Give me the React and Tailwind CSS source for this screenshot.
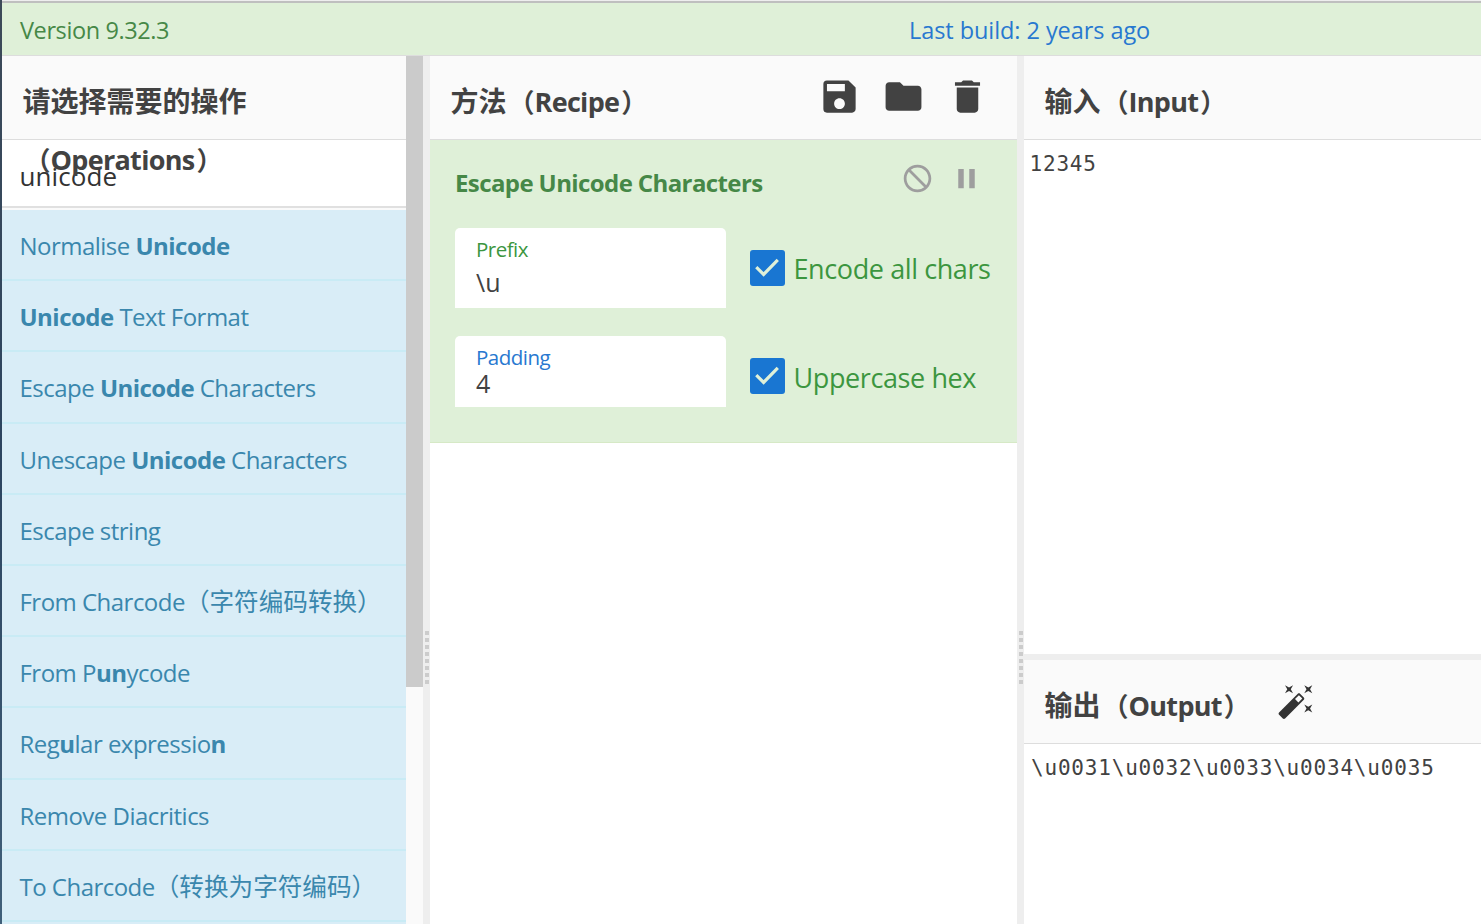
import { MdSave, MdFolder, MdDelete, MdPause, MdNotInterested } from "react-icons/md";

const operations = [
  [{ t: "Normalise " }, { t: "Unicode", b: true }],
  [{ t: "Unicode", b: true }, { t: " Text Format" }],
  [{ t: "Escape " }, { t: "Unicode", b: true }, { t: " Characters" }],
  [{ t: "Unescape " }, { t: "Unicode", b: true }, { t: " Characters" }],
  [{ t: "Escape string" }],
  [{ t: "From Charcode" }, { t: "（字符编码转换）", cjk: true }],
  [{ t: "From P" }, { t: "un", b: true }, { t: "ycode" }],
  [{ t: "Reg" }, { t: "u", b: true }, { t: "lar expressio" }, { t: "n", b: true }],
  [{ t: "Remove Diacritics" }],
  [{ t: "To Charcode" }, { t: "（转换为字符编码）", cjk: true }],
  [],
];

function Operation({ parts }) {
  return (
    <li className="h-[71.2px] shrink-0 border-b-2 border-[#c9ebf5] bg-[#d9edf7] pl-[17.5px] text-2xl leading-[72.5px] tracking-[-0.52px] whitespace-pre text-[#3a87ad]">
      {parts.map((p, i) =>
        p.b ? (
          <b key={i}>{p.t}</b>
        ) : (
          <span key={i} className={p.cjk ? "text-[24.6px] tracking-normal" : ""}>
            {p.t}
          </span>
        )
      )}
    </li>
  );
}

function Title({ lead, latin }) {
  return (
    <h2 className="text-[28px] leading-[58px] font-bold whitespace-nowrap text-[#424242]">
      {lead}
      <span className="pl-[2px] text-[26px]">（</span>
      <span className="text-[27px] tracking-[-0.7px]">{latin}</span>
      <span className="pl-[2px] text-[26px]">）</span>
    </h2>
  );
}

function PaneHeader({ children }) {
  return (
    <div className="flex h-[84px] shrink-0 border-b border-[#dddddd] bg-[#fafafa] pt-[16px] pl-[20.5px]">
      {children}
    </div>
  );
}

function Gutter() {
  return (
    <div className="flex w-[7px] shrink-0 flex-col items-center bg-[#eeeeee] pt-[575px]">
      <div className="flex flex-col gap-[3px]">
        {[0, 1, 2, 3, 4, 5, 6, 7].map((i) => (
          <span key={i} className="h-1 w-1 bg-[#cccccc]" />
        ))}
      </div>
    </div>
  );
}

function Field({ label, value, className, labelClass, valueClass }) {
  return (
    <div className={`flex w-[271px] flex-col rounded-t-[5px] bg-white pl-[21px] ${className}`}>
      <label className={`text-[20.5px] leading-[28px] tracking-[-0.5px] ${labelClass}`}>{label}</label>
      <span className={`text-[25px] text-[#424242] ${valueClass}`}>{value}</span>
    </div>
  );
}

function Check({ label, className }) {
  return (
    <label className={`flex items-center ${className}`}>
      <span className="flex h-9 w-[35px] shrink-0 rounded-[3px] bg-[#1976d2]">
        <svg viewBox="0 0 35 36" className="h-9 w-[35px]">
          <path d="M6.3 17.2 L13.6 24.4 L27.8 9.8" fill="none" stroke="#dff0d8" strokeWidth="3.2" />
        </svg>
      </span>
      <span className="pt-[3px] pl-[9px] text-[27px] leading-9 tracking-[-0.4px] whitespace-nowrap text-[#3c963f]">
        {label}
      </span>
    </label>
  );
}

function Wand() {
  return (
    <svg viewBox="0 0 24 24" className="mt-[6px] ml-[27px] size-[38.5px] shrink-0 text-[#333333]" fill="currentColor">
      <path d="M7.5,5.6L5,7L6.4,4.5L5,2L7.5,3.4L10,2L8.6,4.5L10,7L7.5,5.6M19.5,15.4L22,14L20.6,16.5L22,19L19.5,17.6L17,19L18.4,16.5L17,14L19.5,15.4M22,2L20.6,4.5L22,7L19.5,5.6L17,7L18.4,4.5L17,2L19.5,3.4L22,2M13.34,12.78L15.78,10.34L13.66,8.22L11.22,10.66L13.34,12.78M14.37,7.29L16.71,9.63C17.1,10 17.1,10.65 16.71,11.04L5.04,22.71C4.65,23.1 4,23.1 3.63,22.71L1.29,20.37C0.9,20 0.9,19.35 1.29,18.96L12.96,7.29C13.35,6.9 14,6.9 14.37,7.29Z" />
    </svg>
  );
}

export default function App() {
  return (
    <div className="flex h-[924px] w-[1481px] overflow-hidden bg-white font-['Open_Sans','Noto_Sans_CJK_SC',sans-serif]">
      <div className="w-[2px] shrink-0 bg-linear-to-b from-[#3d4a58] via-[#2c4560] to-[#41607a]" />
      <div className="flex min-w-0 flex-1 flex-col">
        <div className="h-[3px] shrink-0 border-b-2 border-[#bfbfbf] bg-[#eeeeee]" />
        <header className="flex h-[53px] shrink-0 border-b border-[#dddddd] bg-[#dff0d8] text-[23.5px] leading-[54px]">
          <span className="w-[907px] pl-[18px] tracking-[-0.4px] text-[#468847]">Version 9.32.3</span>
          <span className="tracking-[-0.07px] text-[#2878d0]">Last build: 2 years ago</span>
        </header>

        <main className="flex min-h-0 flex-1">
          <section className="flex w-[404px] shrink-0 flex-col overflow-hidden">
            <PaneHeader>
              <div className="relative">
                <Title
                  lead={
                    <>
                      请选择需要的操作
                      <br />
                    </>
                  }
                  latin="Operations"
                />
              </div>
            </PaneHeader>
            <div className="h-[68px] shrink-0 border-b-2 border-[#e0e0e0] bg-white pl-[17.5px] text-[26px] leading-[72px] tracking-[0.1px] text-[#333333]">
              unicode
            </div>
            <div className="h-[2px] shrink-0 bg-[#fafafa]" />
            <ul className="flex flex-col">
              {operations.map((parts, i) => (
                <Operation key={i} parts={parts} />
              ))}
            </ul>
          </section>
          <div className="w-[17px] shrink-0 bg-[#fafafa]">
            <div className="h-[631px] bg-[#cbcbcb]" />
          </div>
          <Gutter />

          <section className="flex w-[587px] shrink-0 flex-col">
            <PaneHeader>
              <Title lead="方法" latin="Recipe" />
              <div className="ml-auto flex items-start pt-[3px] pr-[28px] text-[#424242]">
                <MdSave className="mr-[21px] size-[43px]" />
                <MdFolder className="mr-[21px] size-[43px]" />
                <MdDelete className="size-[43px]" />
              </div>
            </PaneHeader>
            <div className="flex h-[303px] shrink-0 flex-col border-b border-[#d6e9c6] bg-[#dff0d8] pl-[25px]">
              <div className="flex h-[88px] shrink-0 items-start justify-between">
                <h3 className="pt-[25px] text-2xl leading-9 font-bold tracking-[-0.6px] text-[#468847]">
                  Escape Unicode Characters
                </h3>
                <div className="flex items-center gap-4 pt-[22px] pr-[34px] text-[#9e9e9e]">
                  <MdNotInterested className="size-[33px]" />
                  <MdPause className="size-[33px]" />
                </div>
              </div>
              <div className="flex items-start gap-[23.5px]">
                <div className="flex flex-col gap-7">
                  <Field
                    label="Prefix"
                    value="\u"
                    className="h-20 pt-[7px]"
                    labelClass="text-[#3c963f]"
                    valueClass="leading-[38px]"
                  />
                  <Field
                    label="Padding"
                    value="4"
                    className="h-[71px] pt-[7px]"
                    labelClass="text-[#2878d0]"
                    valueClass="leading-[25px]"
                  />
                </div>
                <div className="flex flex-col gap-[72.5px] pt-[21.5px]">
                  <Check label="Encode all chars" className="h-9" />
                  <Check label="Uppercase hex" className="h-9" />
                </div>
              </div>
            </div>
          </section>
          <Gutter />

          <section className="flex min-w-0 flex-1 flex-col">
            <PaneHeader>
              <Title lead="输入" latin="Input" />
            </PaneHeader>
            <div className="h-[514px] shrink-0 pt-[6px] pl-[5.5px] font-['DejaVu_Sans_Mono',monospace] text-[21px] leading-[36px] tracking-[0.8px] text-[#424242]">
              12345
            </div>
            <div className="h-[6px] shrink-0 bg-[#eeeeee]" />
            <PaneHeader>
              <Title lead="输出" latin="Output" />
              <Wand />
            </PaneHeader>
            <div className="pt-[6px] pl-[7px] font-['DejaVu_Sans_Mono',monospace] text-[21px] leading-[36px] tracking-[0.81px] text-[#424242]">
              {"\\u0031\\u0032\\u0033\\u0034\\u0035"}
            </div>
          </section>
        </main>
      </div>
    </div>
  );
}
